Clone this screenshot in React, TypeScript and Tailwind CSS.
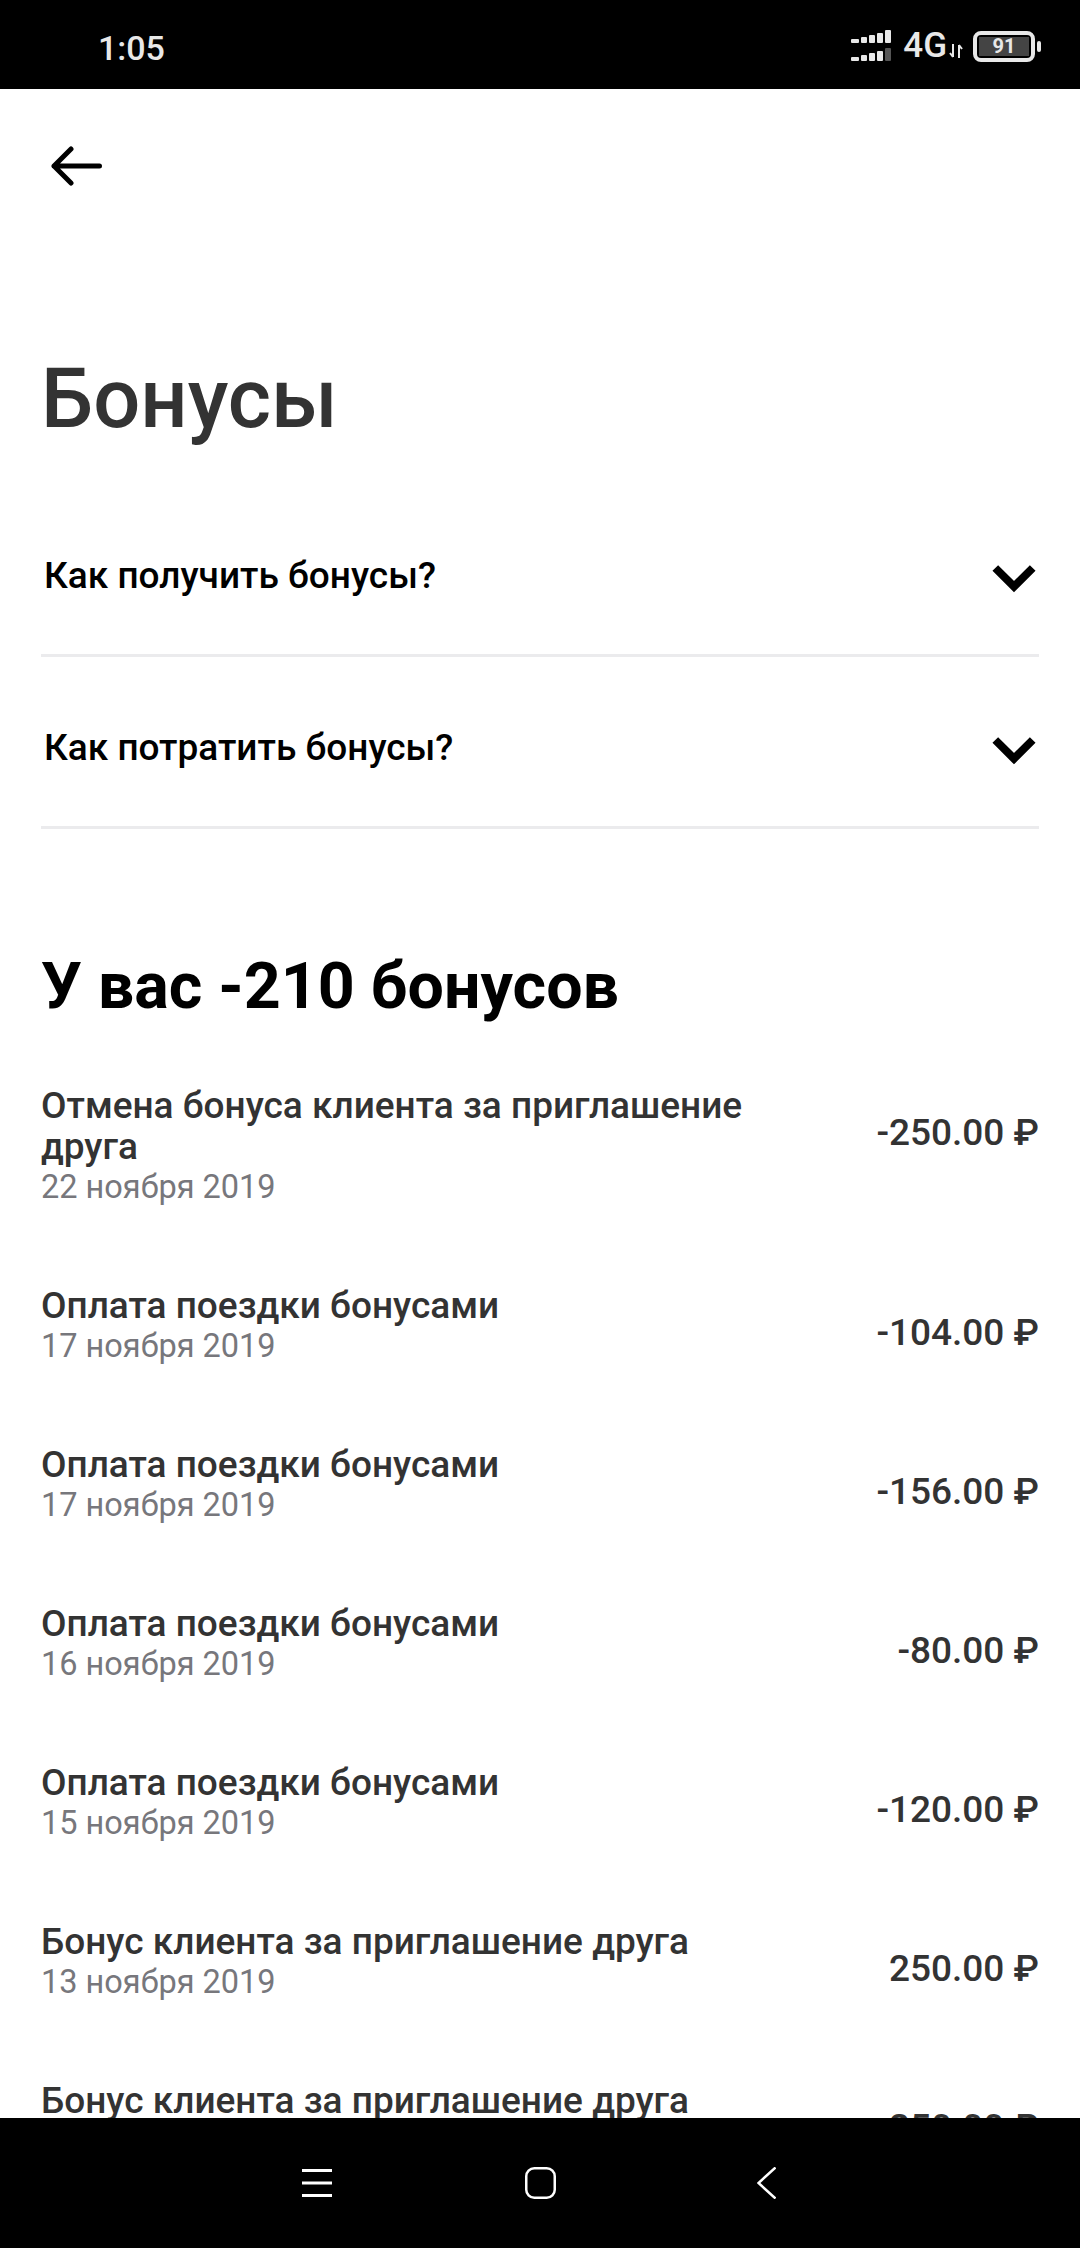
const fontStack = "font-['Roboto','Noto_Sans',sans-serif]";

const questions = ["Как получить бонусы?", "Как потратить бонусы?"];

const transactions = [
	{ title: "Отмена бонуса клиента за приглашение друга", date: "22 ноября 2019", amount: "-250.00 ₽" },
	{ title: "Оплата поездки бонусами", date: "17 ноября 2019", amount: "-104.00 ₽" },
	{ title: "Оплата поездки бонусами", date: "17 ноября 2019", amount: "-156.00 ₽" },
	{ title: "Оплата поездки бонусами", date: "16 ноября 2019", amount: "-80.00 ₽" },
	{ title: "Оплата поездки бонусами", date: "15 ноября 2019", amount: "-120.00 ₽" },
	{ title: "Бонус клиента за приглашение друга", date: "13 ноября 2019", amount: "250.00 ₽" },
	{ title: "Бонус клиента за приглашение друга", date: "12 ноября 2019", amount: "250.00 ₽" },
];

function SignalBars() {
	const bars = [
		{ x: 0, w: 8, h: 4 },
		{ x: 10, w: 6, h: 6 },
		{ x: 18, w: 6, h: 8 },
		{ x: 26, w: 6, h: 10 },
		{ x: 34, w: 6, h: 13 },
	];
	return (
		<svg width="40" height="32" viewBox="0 0 40 32" aria-hidden="true">
			{bars.map((bar) => (
				<rect key={`top-${bar.x}`} x={bar.x} y={13 - bar.h} width={bar.w} height={bar.h} rx="1" fill="#e8e8e8" />
			))}
			{bars.map((bar) => (
				<rect
					key={`bottom-${bar.x}`}
					x={bar.x}
					y={31 - bar.h}
					width={bar.w}
					height={bar.h}
					rx="1"
					fill={bar.x === 34 ? "#555555" : "#e8e8e8"}
				/>
			))}
		</svg>
	);
}

function StatusBar() {
	return (
		<header className="flex h-[89px] shrink-0 items-start justify-between bg-black pl-[98px] pr-[39px] pt-[30px] text-[#e8e8e8]">
			<span className="text-[34px] font-medium leading-[36px]">1:05</span>
			<div className="flex items-center">
				<SignalBars />
				<span className="ml-[12px] text-[35px] font-medium leading-[32px]">4G</span>
				<svg width="14" height="16" viewBox="0 0 14 16" className="mt-[10px] ml-[2px]" aria-hidden="true">
					<path d="M4 1v13M1 10l3 4M10 15V2M10 2l3 4" stroke="#e8e8e8" strokeWidth="2" fill="none" />
				</svg>
				<div className="ml-[10px] flex h-[31px] w-[62px] items-center justify-center rounded-[8px] border-[4px] border-[#e8e8e8] p-[2px]">
					<div className="flex h-full w-full items-center justify-center bg-[#444444] text-[20px] font-bold leading-none">
						91
					</div>
				</div>
				<div className="ml-[2px] h-[11px] w-[4px] rounded-sm bg-[#e8e8e8]" />
			</div>
		</header>
	);
}

function NavBar() {
	return (
		<footer className="flex h-[130px] shrink-0 items-start bg-black pl-[302px] pt-[49px]">
			<svg width="30" height="32" viewBox="0 0 30 32" aria-hidden="true">
				<path d="M0 3.5h30M0 16h30M0 28.5h30" stroke="#fff" strokeWidth="3" />
			</svg>
			<svg width="31" height="32" viewBox="0 0 31 32" className="ml-[193px]" aria-hidden="true">
				<rect x="1.25" y="1.25" width="28.5" height="29.5" rx="8" stroke="#fff" strokeWidth="2.5" fill="none" />
			</svg>
			<svg width="19" height="32" viewBox="0 0 19 32" className="ml-[201px]" aria-hidden="true">
				<path d="M18.5 0.5 1.5 16l17 15.5" stroke="#fff" strokeWidth="2.5" fill="none" />
			</svg>
		</footer>
	);
}

export default function App() {
	return (
		<div className={`flex h-[2248px] w-[1080px] flex-col overflow-hidden bg-white ${fontStack}`}>
			<StatusBar />
			<main className="min-h-0 flex-1 overflow-hidden px-[41px]">
				<button type="button" className="mt-[57px] ml-[10px] block text-black" aria-label="Назад">
					<svg width="52" height="40" viewBox="0 0 52 40" aria-hidden="true">
						<path d="M48.5 20H3M20 3 3 20l17 17" stroke="currentColor" strokeWidth="5" strokeLinecap="round" strokeLinejoin="round" fill="none" />
					</svg>
				</button>
				<h1 className="mt-[163px] text-[83px] font-medium leading-[100px] text-[#333333]">Бонусы</h1>
				<section className="mt-[36px]">
					{questions.map((question) => (
						<div
							key={question}
							className="flex h-[172px] items-center justify-between border-b-[3px] border-[#ebebed] pl-[3px] pt-[12px]"
						>
							<span className="text-[37px] font-medium text-black">{question}</span>
							<svg width="46" height="30" viewBox="0 0 46 30" className="mr-[2px] mt-[6px]" aria-hidden="true">
								<path d="M4.3 4 23 22.7 41.7 4" stroke="currentColor" strokeWidth="8" fill="none" />
							</svg>
						</div>
					))}
				</section>
				<h2 className="mt-[117px] text-[64.5px] font-bold leading-[80px] text-black">У вас -210 бонусов</h2>
				<ul className="mt-[59px]">
					{transactions.map((item) => (
						<li key={`${item.date}-${item.amount}`} className="mb-[77px] flex items-start justify-between">
							<div className="w-[740px]">
								<p className="text-[37px] font-medium leading-[41px] text-[#333333]">{item.title}</p>
								<p className="text-[32.5px] leading-[41px] text-[#77777c]">{item.date}</p>
							</div>
							<span className="mt-[27px] text-[37px] font-medium leading-[41px] text-[#333333]">{item.amount}</span>
						</li>
					))}
				</ul>
			</main>
			<NavBar />
		</div>
	);
}
